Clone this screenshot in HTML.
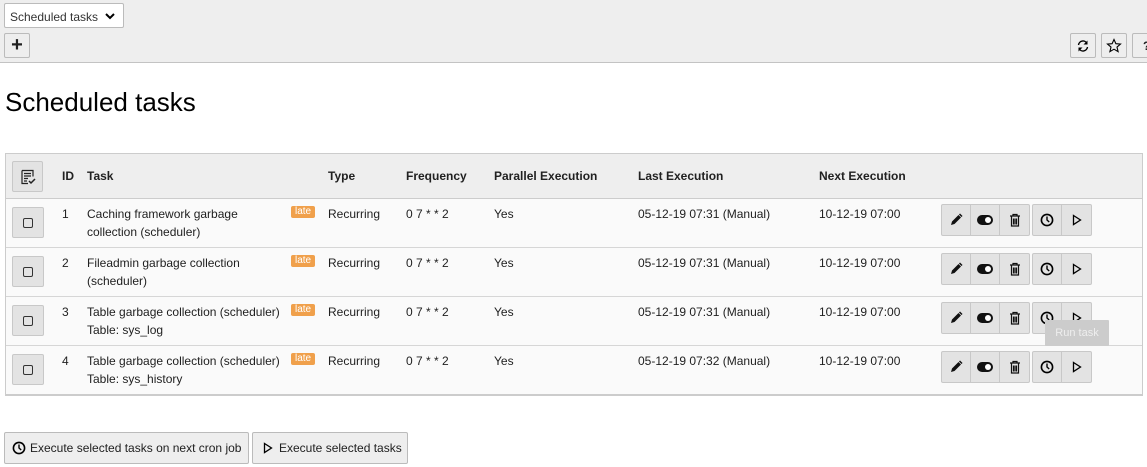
<!DOCTYPE html>
<html><head><style>
*{box-sizing:border-box}
body{margin:0;width:1147px;height:467px;overflow:hidden;font-family:"Liberation Sans",sans-serif;font-size:12px;color:#212121;background:#fff;position:relative}
.hdr{position:absolute;left:0;top:0;width:1147px;height:63px;background:#eee;border-bottom:1px solid #c3c3c3}
.btn{position:absolute;background:#eee;border:1px solid #bbb;border-radius:2px;display:flex;align-items:center;justify-content:center}
.sel{position:absolute;left:4px;top:3px;width:120px;height:25px;background:#fff;border:1px solid #bbb;border-radius:2px;font-size:12px;padding:6px 0 0 5px;color:#333}
h1{position:absolute;left:5px;top:87px;margin:0;font-weight:normal;font-size:26px;font-family:"Liberation Sans",sans-serif;color:#000}
.tbl{position:absolute;left:5px;top:153px;width:1138px;height:243px;border:1px solid #ccc;border-bottom:2px solid #ccc;background:#fafafa}
.th{position:absolute;left:0;top:0;width:1136px;height:45px;background:#eee;border-bottom:1px solid #ccc}
.row{position:absolute;left:0;width:1136px;height:49px;border-bottom:1px solid #d6d6d6}
.t{position:absolute;line-height:18px}
.b{font-weight:bold}
.late{position:absolute;background:#f0a04b;color:#fff;font-size:10px;border-radius:2px;padding:0 4px;line-height:12px}
.grp{position:absolute;display:flex;border:1px solid #c8c8c8;border-radius:2px;background:#e3e3e3}
.grp div{width:29px;height:30px;display:flex;align-items:center;justify-content:center;border-right:1px solid #c8c8c8}
.grp div:last-child{border-right:none}
.cb{position:absolute;left:6px;width:32px;height:31px;background:#e3e3e3;border:1px solid #c8c8c8;border-radius:2px;display:flex;align-items:center;justify-content:center}
.cb span{width:10px;height:10px;border:1.5px solid #333;border-radius:2px}
</style></head><body>
<div class="hdr">
<div class="sel">Scheduled tasks<svg style="position:absolute;right:8px;top:9px" width="10" height="7" viewBox="0 0 10 7"><path d="M1 1l4 4 4-4" fill="none" stroke="#000" stroke-width="2"/></svg></div>
<div class="btn" style="left:4px;top:33px;width:26px;height:25px;font-size:20px;font-weight:bold">+</div>
<div class="btn" style="left:1070px;top:33px;width:26px;height:25px"><svg width="14" height="14" viewBox="0 0 14 14"><path d="M2.5 6A4.5 4.5 0 0 1 11 4.5M11.5 8A4.5 4.5 0 0 1 3 9.5" fill="none" stroke="#000" stroke-width="1.4"/><path d="M11.5 1.5v4h-4z M2.5 12.5v-4h4z" fill="#000"/></svg></div>
<div class="btn" style="left:1101px;top:33px;width:26px;height:25px"><svg width="16" height="16" viewBox="0 0 16 16"><path d="M8 1.5l1.9 4.2 4.6.4-3.5 3 1.1 4.5L8 11.2 3.9 13.6 5 9.1 1.5 6.1l4.6-.4z" fill="none" stroke="#000" stroke-width="1.1"/></svg></div>
<div class="btn" style="left:1132px;top:33px;width:26px;height:25px;font-weight:bold;justify-content:flex-start;padding-left:10px">?</div>
</div>
<h1>Scheduled tasks</h1>
<div class="tbl">
<div class="th">
<div class="cb" style="top:7px;width:31px"><svg width="16" height="16" viewBox="0 0 16 16"><path d="M2 1.5h11v6M2 1.5v13h6M4 4.5h7M4 7h7M4 9.5h4M4 12h3" fill="none" stroke="#222" stroke-width="1.2"/><path d="M9 12l2 2 4-4" fill="none" stroke="#222" stroke-width="1.5"/></svg></div>
<div class="t b" style="left:56px;top:13px">ID</div>
<div class="t b" style="left:81px;top:13px">Task</div>
<div class="t b" style="left:322px;top:13px">Type</div>
<div class="t b" style="left:400px;top:13px">Frequency</div>
<div class="t b" style="left:488px;top:13px">Parallel Execution</div>
<div class="t b" style="left:632px;top:13px">Last Execution</div>
<div class="t b" style="left:813px;top:13px">Next Execution</div>
</div>
<div class="row" style="top:45px">
<div class="cb" style="top:8px"><span></span></div>
<div class="t" style="left:56px;top:6px">1</div>
<div class="t" style="left:81px;top:6px">Caching framework garbage<br>collection (scheduler)</div>
<div class="late" style="left:285px;top:7px">late</div>
<div class="t" style="left:322px;top:6px">Recurring</div><div class="t" style="left:400px;top:6px">0 7 * * 2</div><div class="t" style="left:488px;top:6px">Yes</div><div class="t" style="left:632px;top:6px">05-12-19 07:31 (Manual)</div><div class="t" style="left:813px;top:6px">10-12-19 07:00</div>
</div>
<div class="row" style="top:94px">
<div class="cb" style="top:8px"><span></span></div>
<div class="t" style="left:56px;top:6px">2</div>
<div class="t" style="left:81px;top:6px">Fileadmin garbage collection<br>(scheduler)</div>
<div class="late" style="left:285px;top:7px">late</div>
<div class="t" style="left:322px;top:6px">Recurring</div><div class="t" style="left:400px;top:6px">0 7 * * 2</div><div class="t" style="left:488px;top:6px">Yes</div><div class="t" style="left:632px;top:6px">05-12-19 07:31 (Manual)</div><div class="t" style="left:813px;top:6px">10-12-19 07:00</div>
</div>
<div class="row" style="top:143px">
<div class="cb" style="top:8px"><span></span></div>
<div class="t" style="left:56px;top:6px">3</div>
<div class="t" style="left:81px;top:6px">Table garbage collection (scheduler)<br>Table: sys_log</div>
<div class="late" style="left:285px;top:7px">late</div>
<div class="t" style="left:322px;top:6px">Recurring</div><div class="t" style="left:400px;top:6px">0 7 * * 2</div><div class="t" style="left:488px;top:6px">Yes</div><div class="t" style="left:632px;top:6px">05-12-19 07:31 (Manual)</div><div class="t" style="left:813px;top:6px">10-12-19 07:00</div>
</div>
<div class="row" style="top:192px;border-bottom:none">
<div class="cb" style="top:8px"><span></span></div>
<div class="t" style="left:56px;top:6px">4</div>
<div class="t" style="left:81px;top:6px">Table garbage collection (scheduler)<br>Table: sys_history</div>
<div class="late" style="left:285px;top:7px">late</div>
<div class="t" style="left:322px;top:6px">Recurring</div><div class="t" style="left:400px;top:6px">0 7 * * 2</div><div class="t" style="left:488px;top:6px">Yes</div><div class="t" style="left:632px;top:6px">05-12-19 07:32 (Manual)</div><div class="t" style="left:813px;top:6px">10-12-19 07:00</div>
</div>
</div>
<div id="acts"></div>
<div style="position:absolute;left:1045px;top:320px;width:64px;height:26px;background:#ccc;color:#eee;font-size:11px;text-align:center;line-height:26px;border-radius:1px">Run task</div>
<div class="btn" style="left:4px;top:432px;width:245px;height:32px;justify-content:flex-start;padding-left:7px;font-size:12px"><svg width="14" height="14" viewBox="0 0 14 14" style="margin-right:4px"><circle cx="7" cy="7" r="5.6" fill="none" stroke="#000" stroke-width="1.6"/><path d="M7 3.5V7l2.2 2" fill="none" stroke="#000" stroke-width="1.4"/></svg>Execute selected tasks on next cron job</div>
<div class="btn" style="left:252px;top:432px;width:156px;height:32px;justify-content:flex-start;padding-left:10px;font-size:12px"><svg width="10" height="12" viewBox="0 0 10 12" style="margin-right:6px"><path d="M1.5 1.5l7 4.5-7 4.5z" fill="none" stroke="#000" stroke-width="1.3"/></svg>Execute selected tasks</div>
<script>
var tops=[204,253,302,351],h='';
var pen='<svg width="14" height="14" viewBox="0 0 14 14"><path d="M2 12l1-3.5 6.5-6.5 2.5 2.5-6.5 6.5z" fill="#111"/><path d="M10.5 1l2.5 2.5" stroke="#111" stroke-width="1.5"/></svg>';
var tog='<svg width="16" height="10" viewBox="0 0 16 10"><rect x="0" y="0" width="16" height="10" rx="5" fill="#111"/><circle cx="11" cy="5" r="3" fill="#fff"/></svg>';
var tr='<svg width="12" height="14" viewBox="0 0 12 14"><path d="M1 3h10M4 3V1.5h4V3M2.5 3.5v9.5h7V3.5M4.5 5.5v6M6 5.5v6M7.5 5.5v6" fill="none" stroke="#111" stroke-width="1.2"/></svg>';
var cl='<svg width="14" height="14" viewBox="0 0 14 14"><circle cx="7" cy="7" r="5.6" fill="none" stroke="#000" stroke-width="1.6"/><path d="M7 3.5V7l2.2 2" fill="none" stroke="#000" stroke-width="1.4"/></svg>';
var pl='<svg width="10" height="12" viewBox="0 0 10 12"><path d="M1.5 1.5l7 4.5-7 4.5z" fill="none" stroke="#000" stroke-width="1.3"/></svg>';
tops.forEach(function(t){h+='<div class="grp" style="left:941px;top:'+t+'px"><div>'+pen+'</div><div>'+tog+'</div><div>'+tr+'</div></div><div class="grp" style="left:1032px;top:'+t+'px"><div>'+cl+'</div><div>'+pl+'</div></div>';});
document.getElementById('acts').innerHTML=h;
</script>
</body></html>
